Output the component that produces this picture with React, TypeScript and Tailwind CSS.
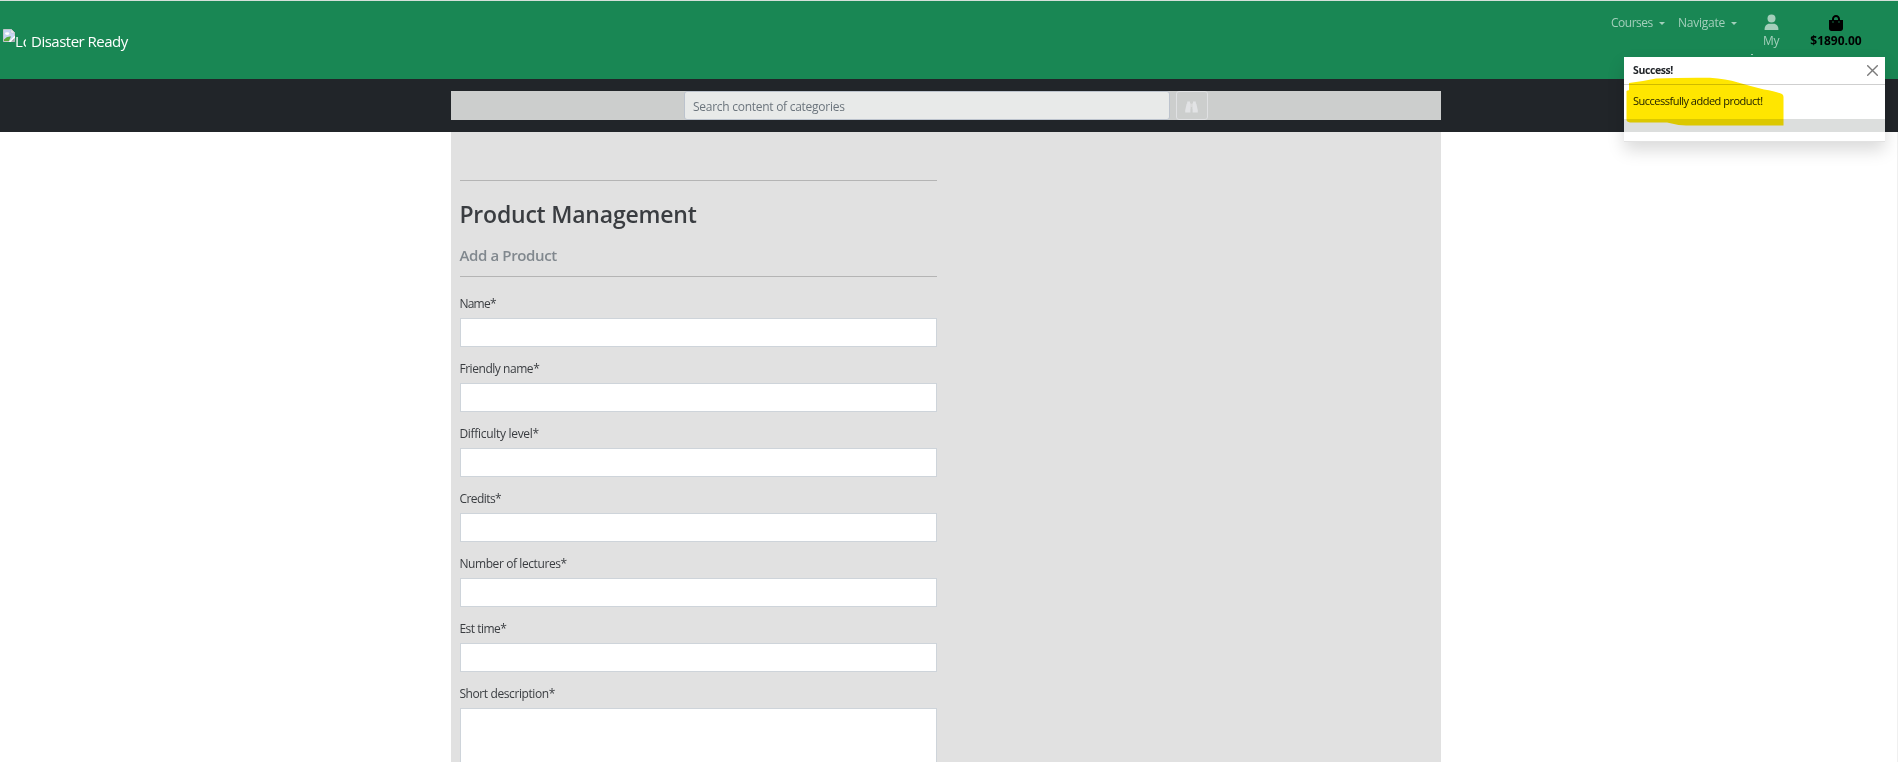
const fields = [
  { label: "Name*", track: "tracking-[-0.75px]" },
  { label: "Friendly name*", track: "tracking-[-0.45px]" },
  { label: "Difficulty level*", track: "tracking-[-0.3px]" },
  { label: "Credits*", track: "tracking-[-0.55px]" },
  { label: "Number of lectures*", track: "tracking-[-0.41px]" },
  { label: "Est time*", track: "tracking-[-0.5px]" },
];

const labelClass = "-ml-[0.6px] block h-[19px] text-[12px] leading-[19px] text-[#3a3d41] whitespace-nowrap";

function BrokenImage() {
  return (
    <svg width="12" height="13" viewBox="0 0 12 13" className="shrink-0">
      <path d="M0.5 0.5H8.5L11.5 3.5V12.5H0.5Z" fill="#c6d5f2" stroke="#c4c7cb" />
      <path d="M8 0.5V4H11.5Z" fill="#f6f8fb" stroke="#b9bdc3" strokeWidth="0.6" />
      <ellipse cx="4.2" cy="4.6" rx="2.2" ry="1.3" fill="#ffffff" />
      <path d="M1 12V10.5Q4 6.8 8 7.5L6 12Z" fill="#58aa3c" />
      <path d="M5.5 13L12 6.5V9L8 13Z" fill="#ffffff" />
      <path d="M8 12.5H11.5V9Z" fill="#9fa2a8" />
    </svg>
  );
}

function PersonIcon() {
  return (
    <svg width="15" height="17" viewBox="0 0 15 17" fill="currentColor">
      <circle cx="7.5" cy="4.5" r="4" />
      <path d="M0.6 16C0.4 12 2.8 9.8 5.2 9.8H9.8C12.2 9.8 14.6 12 14.4 16Z" />
    </svg>
  );
}

function BagIcon() {
  return (
    <svg width="14" height="16" viewBox="0 0 448 512" fill="currentColor">
      <path d="M352 160v-32C352 57.42 294.579 0 224 0 153.42 0 96 57.42 96 128v32H0v272c0 44.183 35.817 80 80 80h288c44.183 0 80-35.817 80-80V160h-96zm-192-32c0-35.29 28.71-64 64-64s64 28.71 64 64v32H160v-32zm160 120c-13.255 0-24-10.745-24-24s10.745-24 24-24 24 10.745 24 24-10.745 24-24 24zm-192 0c-13.255 0-24-10.745-24-24s10.745-24 24-24 24 10.745 24 24-10.745 24-24 24z" />
    </svg>
  );
}

function BinocularsIcon() {
  return (
    <svg width="13" height="12" viewBox="0 0 13 12" fill="currentColor">
      <path d="M2.2 0.5H5V2.3H5.6V8H5.4V11.5H0.2V9.2L1.6 3L2.2 2.3Z" />
      <path d="M10.8 0.5H8V2.3H7.4V8H7.6V11.5H12.8V9.2L11.4 3L10.8 2.3Z" />
      <path d="M5.6 2.8H7.4V6H5.6Z" opacity="0.6" />
    </svg>
  );
}

function Caret() {
  return <span className="mt-[8px] h-0 w-0 border-x-[3px] border-t-[3px] border-x-transparent border-t-current" />;
}

function Toast() {
  return (
    <div className="absolute left-[1624px] top-[57px] flex h-[85px] w-[261px] flex-col border-b border-[#e2e2e2] bg-white shadow-[0_8px_16px_rgba(0,0,0,0.15)]">
      <div className="flex h-[28px] items-center justify-between border-b border-[#cfcfcf] pl-[9px] pr-[7px]">
        <strong className="-mt-px text-[10.5px] font-bold leading-4 tracking-[-0.4px] text-[#212529]">Success!</strong>
        <svg width="11" height="11" viewBox="0 0 11 11" stroke="#7b7b7b" strokeWidth="1.4" strokeLinecap="round">
          <path d="M0.7 0.7L10.3 10.3M10.3 0.7L0.7 10.3" />
        </svg>
      </div>
      <p className="h-[34px] whitespace-nowrap pl-[9px] text-[11px] leading-[32px] tracking-[-0.5px] text-[#212529]">
        Successfully added product!
      </p>
      <div className="h-[13px] bg-[#dcdedd]" />
      <svg className="absolute left-[2px] top-[20px] mix-blend-multiply" width="158" height="50" viewBox="0 0 158 50">
        <path
          d="M3 6Q16 4.500 30 1.500Q56 0.500 84 0.800Q100 2 112 5.500Q124 9 138 12.500Q150 14.500 156 17Q157.500 18 157.500 20V48.500H60Q50 48 41 45.500H4Q0.500 44.500 0.500 43V14Q1 13.300 3 13.300Z"
          fill="#ffe600"
        />
      </svg>
    </div>
  );
}

export default function App() {
  return (
    <div className="relative flex h-[762px] w-full flex-col overflow-hidden bg-white font-['Open_Sans','Noto_Sans',sans-serif]">
      <header className="flex h-[79px] shrink-0 justify-between border-t border-[#d5e0da] bg-[#198754]">
        <div className="flex pl-[3px] pt-[28px] text-[15px] leading-[24px] text-white">
          <BrokenImage />
          <span className="w-[11px] overflow-hidden whitespace-nowrap">Lo</span>
          <span className="ml-[5px] whitespace-nowrap tracking-[-0.5px]">Disaster Ready</span>
        </div>
        <nav className="flex w-[287px] text-[12px] leading-[18px] text-[#a3cfbb]">
          <div className="mt-[13px] flex h-[18px] w-[67px] gap-[7px]">
            <span className="w-[41px] whitespace-nowrap tracking-[-0.5px]">Courses</span>
            <Caret />
          </div>
          <div className="mt-[13px] flex h-[18px] w-[78px] gap-[6px]">
            <span className="w-[47px] whitespace-nowrap tracking-[-0.24px]">Navigate</span>
            <Caret />
          </div>
          <div className="flex w-[30px] flex-col items-center pt-[13px]">
            <PersonIcon />
            <span className="mt-[1px] tracking-[-0.4px]">My</span>
            <span className="mt-[4px] h-px w-[2px] self-start -ml-[5px] bg-[#a3cfbb]" />
          </div>
          <div className="ml-[23px] flex w-[54px] flex-col items-center pt-[14px] text-black">
            <BagIcon />
            <span className="mt-[1px] whitespace-nowrap font-bold">$1890.00</span>
          </div>
        </nav>
      </header>

      <div className="flex h-[53px] shrink-0 bg-[#212529] pl-[451px] pt-[12px]">
        <div className="flex h-[29px] w-[990px] bg-[#cccecd] pl-[233px]">
          <div className="flex h-[29px] w-[486px] items-center rounded-[3px] border border-[#bcc3cd] bg-[#e8eae9] pl-[8px] text-[12px] tracking-[-0.27px] text-[#6c757d]">
            <span className="mt-[2px]">Search content of categories</span>
          </div>
          <button className="ml-[6px] flex h-[29px] w-[32px] items-center justify-center rounded-[3px] border border-[#e0e1e3] pr-px pt-[3px] text-[#e2e3e5]">
            <BinocularsIcon />
          </button>
        </div>
      </div>

      <main className="flex grow border-r border-[#f0f0f0] pl-[451px]">
        <div className="w-[990px] bg-[#e1e1e1] pl-[9px] pt-[48px]">
          <section className="w-[477px]">
            <hr className="border-[#b4b4b4]" />
            <h2 className="-ml-[0.6px] mt-[15px] h-[36px] text-[23px] font-semibold leading-[36px] tracking-[-0.21px] text-[#3a3d41]">Product Management</h2>
            <h5 className="-ml-[0.6px] mt-[12px] h-[20px] text-[15px] font-semibold leading-[22px] tracking-[-0.36px] text-[#81888e]">Add a Product</h5>
            <hr className="mt-[12px] border-[#b4b4b4]" />
            <form className="pt-[17px]">
              {fields.map((f) => (
                <div key={f.label} className="h-[65px]">
                  <label className={`${labelClass} ${f.track}`}>{f.label}</label>
                  <div className="mt-[5px] h-[29px] border border-[#ced4da] bg-white" />
                </div>
              ))}
              <label className={`${labelClass} tracking-[-0.4px]`}>Short description*</label>
              <div className="mt-[5px] h-[60px] border border-[#ced4da] bg-white" />
            </form>
          </section>
        </div>
      </main>
      <Toast />
    </div>
  );
}
